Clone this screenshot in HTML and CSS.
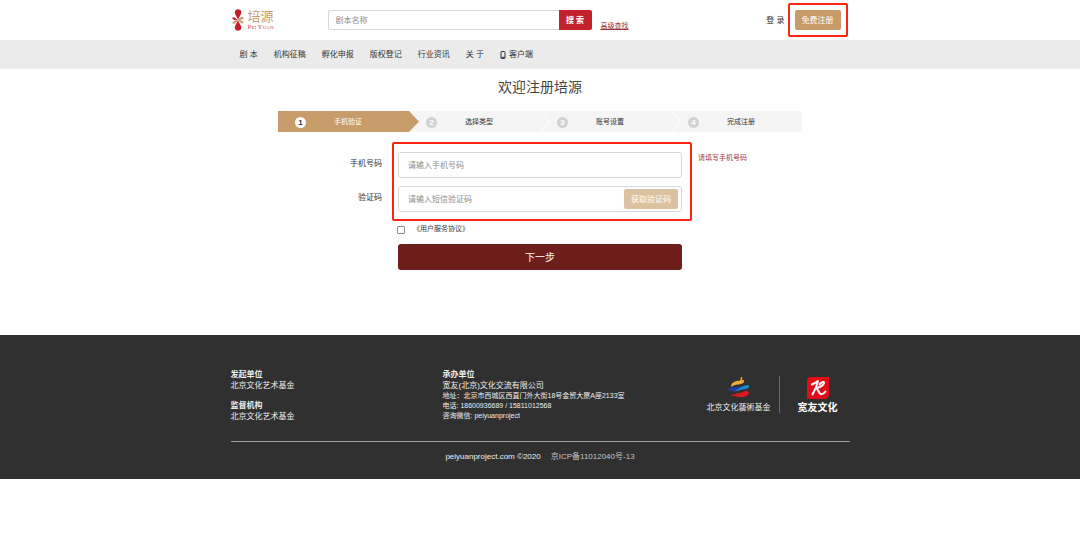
FILE: index.html
```html
<!DOCTYPE html>
<html lang="zh-CN">
<head>
<meta charset="utf-8">
<meta name="viewport" content="width=device-width, initial-scale=1">
<title>欢迎注册培源</title>
<link rel="stylesheet" href="styles.css">
</head>
<body>
<header class="header">
  <div class="container header-row">
    <a class="logo" href="#" aria-label="培源 Pei Yuan">
      <svg class="logo-mark" viewBox="0 0 12 22" aria-hidden="true">
        <path fill="#c51f2d" d="M6 11C5.300 8 2.800 6 2.800 3.200C2.900 1 4.500.3 6 .3S9.200 1 9.300 3.200C9.300 6 6.700 8 6 11zM6 11C5.300 14 2.800 16 2.800 18.800C2.900 21 4.500 21.700 6 21.700S9.200 21 9.300 18.800C9.300 16 6.700 14 6 11z"/>
        <path fill="#c51f2d" d="M5.800 11.500C4 9 2 7.500.6 8.600C0 9.800 1 11.500 5.800 11.500z"/>
        <path fill="#c79b6a" d="M6 11C8 8 10 7 11.600 8.300C12 10 10 11.200 6 11zM6 11C8.500 11 11.700 12 11.500 13.900C10.700 15.600 8 13.500 6 11zM5.800 11.200C4.500 13.700 2 15.700.6 14.500C0 12.500 3 11.300 5.800 11.200z"/>
      </svg>
      <span class="logo-text"><span class="logo-cn">培源</span><span class="logo-en">Pei Yuan</span></span>
    </a>
    <form class="search">
      <input class="search-input" type="text" placeholder="剧本名称" aria-label="剧本名称">
      <button class="search-button" type="button">搜 索</button>
    </form>
    <a class="advanced" href="#">高级查找</a>
    <a class="login" href="#">登 录</a>
    <div class="marked marked-register"><button class="register" type="button">免费注册</button></div>
  </div>
</header>
<nav class="nav">
  <div class="container nav-row">
    <a href="#">剧 本</a>
    <a href="#">机构征稿</a>
    <a href="#">孵化申报</a>
    <a href="#">版权登记</a>
    <a href="#">行业资讯</a>
    <a href="#">关 于</a>
    <a class="client" href="#"><svg class="phone" viewBox="0 0 6 8" aria-hidden="true"><rect x="1" y=".5" width="4" height="7" rx=".7" fill="none" stroke="#333"/><path d="M1 6.300h4" stroke="#333"/></svg>客户端</a>
  </div>
</nav>
<main class="main">
  <h1 class="title">欢迎注册培源</h1>
  <ol class="steps">
    <li class="step step-active"><span class="num">1</span>手机验证</li>
    <li class="step"><span class="num">2</span>选择类型</li>
    <li class="step"><span class="num">3</span>账号设置</li>
    <li class="step"><span class="num">4</span>完成注册</li>
  </ol>
  <form class="form">
    <div class="labels">
      <label for="phone">手机号码</label>
      <label for="code">验证码</label>
    </div>
    <div class="marked marked-fields">
      <input class="field" id="phone" type="text" placeholder="请输入手机号码">
      <div class="field code-field">
        <input class="code-input" id="code" type="text" placeholder="请输入短信验证码">
        <button class="code-button" type="button">获取验证码</button>
      </div>
    </div>
    <p class="error">请填写手机号码</p>
    <div class="agree">
      <input class="check" id="agree" type="checkbox">
      <label for="agree">《用户服务协议》</label>
    </div>
    <button class="next" type="button">下一步</button>
  </form>
</main>
<footer class="footer">
  <div class="container">
    <div class="footer-top">
      <div class="organisers">
        <section><h2>发起单位</h2><p>北京文化艺术基金</p></section>
        <section><h2>监督机构</h2><p>北京文化艺术基金</p></section>
      </div>
      <section class="contact">
        <h2>承办单位</h2>
        <p>宽友(北京)文化交流有限公司</p>
        <p class="small">地址：北京市西城区西直门外大街18号金贸大厦A座2133室</p>
        <p class="small">电话: 18600936689 / 15811012568</p>
        <p class="small">咨询微信: peiyuanproject</p>
      </section>
      <div class="partners">
        <div class="partner fund">
          <svg class="fund-mark" viewBox="0 0 24 24" aria-hidden="true">
            <path fill="#f2a93b" d="M3.500 12C3 6.500 8 5.500 13.500 4.800L14 1l1.500.2-.2 3.400C17 4 18 4.300 17.500 6.500C15 10.500 8 8 3.500 12z"/>
            <path fill="#1d3f9c" d="M.5 14.500C3 11 8 12.500 14 11.500C13 14.500 10 16 7 16.500C4 17 1.500 17 .5 14.500z"/>
            <path fill="#1687cf" d="M7 16.500C12 15 12 11.800 17 10.800C20 10 22.500 9.300 23.300 11C23 15 17 14 13 15.500C10.500 16.600 8.500 17 7 16.500z"/>
            <path fill="#df1720" d="M2.500 22.500C7 18 12 20 16 17.200C19 15.700 23.500 16 22.800 19C21 23 15 23.300 11 22.600C7 21.800 5 21.700 2.500 22.500z"/>
          </svg>
          <span class="fund-name">北京文化藝術基金</span>
        </div>
        <div class="partner kuanyou">
          <svg class="kuanyou-mark" viewBox="0 0 24 24" aria-hidden="true">
            <path fill="#e20b18" d="M5 1h18v17q0 5-5 5H1V5q0-4 4-4z"/>
            <path fill="none" stroke="#fff" stroke-width="2" stroke-linecap="round" stroke-linejoin="round" d="M6 8.500C8 7.500 10 6.500 12 5C11 9.500 9 14 6.500 18.500M9.500 12.500C13 11.500 18.500 9 18 6.500C17.500 5 14.500 7 13.500 8.500M10.500 12.500C12.500 13.500 12.500 17.500 15 18.300C17 18.500 18.500 17 19.500 15.500"/>
          </svg>
          <span class="kuanyou-name">宽友文化</span>
        </div>
      </div>
    </div>
    <div class="footer-bottom"><span>peiyuanproject.com ©2020</span><a href="#">京ICP备11012040号-13</a></div>
  </div>
</footer>
</body>
</html>
```

FILE: styles.css
```css
* {
  box-sizing: border-box;
}

body {
  margin: 0;
  background: #fff;
  color: #333;
  font: 8px/11px "Liberation Sans", "Noto Sans CJK SC", sans-serif;
}

a {
  color: inherit;
  text-decoration: none;
}

h1, h2, p, ol {
  margin: 0;
  padding: 0;
}

input, button {
  margin: 0;
  padding: 0;
  font: inherit;
}

button {
  border: 0;
  color: #fff;
}

input::placeholder {
  color: #8c8c8c;
  opacity: 1;
}

.container {
  max-width: 619px;
  margin: 0 auto;
}

.header-row {
  display: flex;
  align-items: center;
  height: 40px;
}

.logo {
  display: flex;
  align-items: center;
  gap: 4px;
  width: 97px;
  padding-left: 1px;
}

.logo-mark {
  width: 12px;
  height: 22px;
}

.logo-text {
  display: flex;
  flex-direction: column;
}

.logo-cn {
  color: #c79b6a;
  font-size: 13px;
  line-height: 14px;
}

.logo-en {
  color: #c4505a;
  font-family: "Liberation Serif", serif;
  font-size: 7px;
  font-variant: small-caps;
  line-height: 6px;
}

.search {
  display: flex;
  width: 264px;
  height: 20px;
}

.search-input {
  flex: 1;
  min-width: 0;
  padding: 0 7px;
  border: 1px solid #d5d8dc;
  border-right: 0;
  border-radius: 2px 0 0 2px;
}

.search-button {
  width: 33px;
  border-radius: 0 2px 2px 0;
  background: #c1222b;
  font-weight: bold;
}

.advanced {
  margin: 10px auto 0 9px;
  color: #982f32;
  font-size: 7px;
  text-decoration: underline;
}

.login {
  margin-right: 3px;
}

.marked {
  border: 2px solid #fa2414;
  border-radius: 2px;
}

.marked-register {
  margin-right: 2px;
  padding: 5px;
}

.register {
  display: block;
  width: 46px;
  height: 20px;
  border-radius: 2px;
  background: #c79b6a;
}

.nav {
  background: #ebebeb;
}

.nav-row {
  display: flex;
  align-items: center;
  gap: 16px;
  height: 29px;
  padding-left: 9px;
}

.client {
  display: flex;
  align-items: center;
  gap: 3px;
}

.phone {
  width: 6px;
  height: 8px;
}

.main {
  max-width: 524px;
  min-height: 266px;
  margin: 0 auto;
  padding-top: 8px;
}

.title {
  color: #444;
  font-size: 14px;
  font-weight: normal;
  line-height: 20px;
  text-align: center;
}

.steps {
  display: flex;
  height: 21px;
  margin-top: 14px;
  background: #f5f5f5;
  font-size: 7px;
  list-style: none;
}

.step {
  position: relative;
  display: flex;
  flex: 1;
  align-items: center;
  gap: 28px;
  padding-left: 17px;
}

.step:not(:last-child)::after {
  position: absolute;
  top: 0;
  left: 100%;
  width: 10px;
  height: 21px;
  background: #fff;
  clip-path: polygon(0 0, 10% 0, 100% 50%, 10% 100%, 0 100%, 90% 50%);
  content: "";
}

.step-active {
  background: #c79b6a;
  color: #fff;
}

.step-active:not(:last-child)::after {
  background: #c79b6a;
  clip-path: polygon(0 0, 100% 50%, 0 100%);
}

.num {
  width: 11px;
  height: 11px;
  margin-top: 2px;
  border-radius: 50%;
  background: #d2d2d2;
  color: #fff;
  font-size: 8px;
  font-weight: bold;
  text-align: center;
}

.step-active .num {
  background: #fff;
  color: #333;
}

.form {
  display: grid;
  grid-template-columns: 104px 300px 1fr;
  column-gap: 10px;
  margin-top: 10px;
}

.labels {
  display: grid;
  gap: 23px;
  align-content: start;
  padding-top: 16px;
  text-align: right;
}

.marked-fields {
  display: grid;
  gap: 8px;
  padding: 8px 8px 7px 4px;
}

.field {
  width: 100%;
  height: 26px;
  padding: 0 9px;
  border: 1px solid #d5d8dc;
  border-radius: 3px;
}

.code-field {
  display: flex;
  align-items: center;
  padding-right: 3px;
}

.code-input {
  flex: 1;
  min-width: 0;
  border: 0;
  outline: 0;
}

.code-button {
  width: 54px;
  height: 20px;
  border-radius: 2px;
  background: #dcc1a0;
}

.error {
  margin-left: -4px;
  padding-top: 10px;
  color: #a5383c;
  font-size: 7px;
}

.agree {
  display: flex;
  grid-column: 2;
  align-items: flex-start;
  gap: 8px;
  height: 16px;
  padding: 2px 0 0 5px;
  font-size: 7px;
}

.check {
  width: 8px;
  height: 8px;
  margin-top: 3px;
  border: 1px solid #8b8b8b;
  border-radius: 1px;
  background: #fff;
  appearance: none;
}

.check:checked {
  background: #6e1f1b;
}

.next {
  grid-column: 2;
  height: 26px;
  margin: 7px 10px 0 6px;
  border-radius: 3px;
  background: #6e1f1b;
  font-size: 10px;
}

.footer {
  background: #303030;
  color: #eee;
}

.footer h2 {
  font-size: 8px;
}

.footer-top {
  display: grid;
  grid-template-columns: 212px 1fr auto;
  height: 107px;
  padding: 34px 12px 0 0;
  border-bottom: 1px solid #9b9b9b;
}

.organisers {
  display: grid;
  gap: 9px;
  align-content: start;
}

.small {
  font-size: 7px;
  line-height: 10px;
}

.partners {
  display: flex;
  align-items: flex-start;
  padding-top: 7px;
}

.partner {
  display: flex;
  flex-direction: column;
  align-items: center;
}

.fund {
  height: 37px;
  padding-right: 8px;
  border-right: 1px solid #6b6b6b;
}

.fund-mark {
  width: 24px;
  height: 24px;
}

.fund-name {
  margin-top: 4px;
  font-family: "Liberation Serif", "Noto Sans CJK TC", serif;
}

.kuanyou {
  padding-left: 18px;
}

.kuanyou-mark {
  width: 24px;
  height: 24px;
}

.kuanyou-name {
  margin-top: 2px;
  color: #fff;
  font-size: 10px;
  font-weight: bold;
}

.footer-bottom {
  display: flex;
  justify-content: center;
  gap: 10px;
  padding: 9px 0 17px;
}

.footer-bottom a {
  color: #c4c4c4;
}
```
